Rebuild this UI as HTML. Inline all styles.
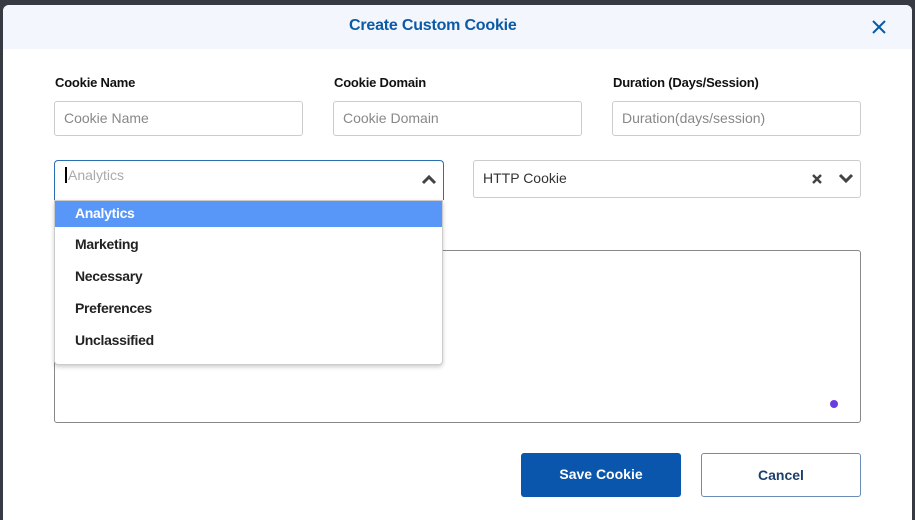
<!DOCTYPE html>
<html><head><style>
*{box-sizing:border-box;margin:0;padding:0}
html,body{width:915px;height:520px;overflow:hidden}
body{background:#373a42;font-family:"Liberation Sans",sans-serif;position:relative}
.modal{position:absolute;left:3px;top:5px;width:909px;height:515px;background:#fff;border-radius:6px 6px 0 0;overflow:hidden}
.hdr{height:44px;background:#f3f7fd;color:#0b5aa6;font-weight:bold;font-size:16px;position:relative}
.abs{position:absolute}
.lbl{font-size:13px;font-weight:bold;color:#111;letter-spacing:-0.2px}
.inp{border:1px solid #ccc;border-radius:3px;height:35px;font-size:14px;color:#888;padding-left:9px;line-height:33px}
.dd{border:1px solid #ccc;border-radius:0 0 4px 4px;background:#fff;box-shadow:0 2px 4px rgba(0,0,0,.2)}
.opt{height:32px;line-height:30px;padding-left:20px;font-size:14px;font-weight:bold;color:#222;letter-spacing:-0.3px}
</style></head><body>
<div class="modal">
<div class="hdr"><span class="abs" style="left:346px;top:12px;letter-spacing:-0.2px">Create Custom Cookie</span></div>
<svg class="abs" style="left:868px;top:14px" width="16" height="16" viewBox="0 0 16 16"><path d="M2 2L14 14M14 2L2 14" stroke="#0b5aa6" stroke-width="2"/></svg>
<div class="abs lbl" style="left:52px;top:70px">Cookie Name</div>
<div class="abs lbl" style="left:331px;top:70px">Cookie Domain</div>
<div class="abs lbl" style="left:610px;top:70px">Duration (Days/Session)</div>
<div class="abs inp" style="left:51px;top:96px;width:249px">Cookie Name</div>
<div class="abs inp" style="left:330px;top:96px;width:249px">Cookie Domain</div>
<div class="abs inp" style="left:609px;top:96px;width:249px">Duration(days/session)</div>
<div class="abs" style="left:51px;top:155px;width:390px;height:40px;border:1px solid #2a6fb0;border-bottom:none;border-radius:4px 4px 0 0;font-size:14px;color:#aaa;padding:6px 0 0 10px"><span style="border-left:2px solid #000;padding-left:1px">Analytics</span></div>
<svg class="abs" style="left:418px;top:168px" width="16" height="12" viewBox="0 0 16 12"><path d="M2 10L8 4L14 10" stroke="#444" stroke-width="3" fill="none"/></svg>
<div class="abs inp" style="left:470px;top:155px;width:388px;height:38px;line-height:34px;color:#333">HTTP Cookie</div>
<svg class="abs" style="left:808px;top:168px" width="12" height="12" viewBox="0 0 12 12"><path d="M2 2L10 10M10 2L2 10" stroke="#444" stroke-width="2.5"/></svg>
<svg class="abs" style="left:835px;top:167px" width="16" height="12" viewBox="0 0 16 12"><path d="M2 3L8 9L14 3" stroke="#444" stroke-width="3" fill="none"/></svg>
<div class="abs" style="left:51px;top:245px;width:807px;height:173px;border:1px solid #888;border-radius:3px"></div>
<div class="abs" style="left:827px;top:395px;width:8px;height:8px;border-radius:50%;background:#6a3de0"></div>
<div class="abs dd" style="left:51px;top:195px;width:389px;height:165px">
<div class="opt" style="background:#5897f8;color:#fff;height:26px;line-height:24px">Analytics</div>
<div class="opt" style="margin-top:2px">Marketing</div>
<div class="opt">Necessary</div>
<div class="opt">Preferences</div>
<div class="opt">Unclassified</div>
</div>
<div class="abs" style="left:518px;top:448px;width:160px;height:44px;background:#0b56ad;border-radius:3px;color:#fff;font-weight:bold;font-size:14px;text-align:center;line-height:42px">Save Cookie</div>
<div class="abs" style="left:698px;top:448px;width:160px;height:44px;border:1px solid #6a8db5;border-radius:3px;color:#1d3f6b;font-weight:bold;font-size:14px;text-align:center;line-height:42px">Cancel</div>
</div>
</body></html>
